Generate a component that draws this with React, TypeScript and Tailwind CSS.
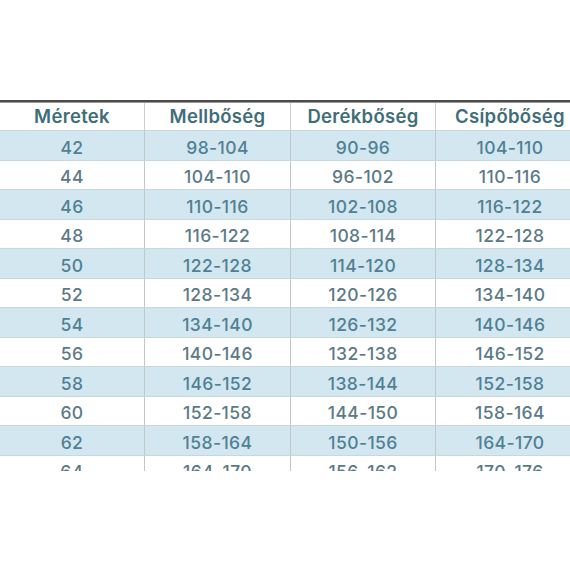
const rows: [string, string, string, string][] = [
  ["42", "98-104", "90-96", "104-110"],
  ["44", "104-110", "96-102", "110-116"],
  ["46", "110-116", "102-108", "116-122"],
  ["48", "116-122", "108-114", "122-128"],
  ["50", "122-128", "114-120", "128-134"],
  ["52", "128-134", "120-126", "134-140"],
  ["54", "134-140", "126-132", "140-146"],
  ["56", "140-146", "132-138", "146-152"],
  ["58", "146-152", "138-144", "152-158"],
  ["60", "152-158", "144-150", "158-164"],
  ["62", "158-164", "150-156", "164-170"],
  ["64", "164-170", "156-162", "170-176"],
]

const headers = ["Méretek", "Mellbőség", "Derékbőség", "Csípőbőség"]

export default function App() {
  return (
    <div
      className="w-[570px] h-[570px] bg-white overflow-hidden pt-[100px]"
      style={{ fontFamily: "Inter, 'Open Sans', sans-serif" }}
    >
      <div className="h-[3px] bg-[#4b4b4b] border-b border-[#9a9a9a]" />
      <div className="w-[584px]">
        {/* header */}
        <div className="grid grid-cols-[145px_146px_145px_148px] h-[27px] bg-white">
          {headers.map((h, i) => (
            <div
              key={h}
              className={`flex items-center justify-center text-[18.5px] font-semibold text-[#3f6e79] tracking-[0.3px] ${i < 3 ? "border-r border-[#c8cfd2]" : ""}`}
            >
              {h}
            </div>
          ))}
        </div>

        {/* last row is cut off at the bottom, as in the source picture */}
        {rows.map((r, idx) => {
          const last = idx === rows.length - 1
          return (
            <div
              key={r[0]}
              className={`grid grid-cols-[145px_146px_145px_148px] overflow-hidden border-t border-[#c9d6db] ${last ? "h-[16px]" : "h-[29.5px]"} ${idx % 2 === 0 ? "bg-[#d3e7f1]" : "bg-white"}`}
            >
              {r.map((c, i) => (
                <div
                  key={i}
                  className={`h-[29px] flex items-center justify-center pt-[5px] text-[17.5px] font-medium tracking-[0.4px] ${idx % 2 === 0 ? "text-[#4f8094]" : "text-[#5b7a86]"} ${i < 3 ? "border-r border-[#c0c8cc]" : ""}`}
                >
                  {c}
                </div>
              ))}
            </div>
          )
        })}
      </div>
    </div>
  )
}
